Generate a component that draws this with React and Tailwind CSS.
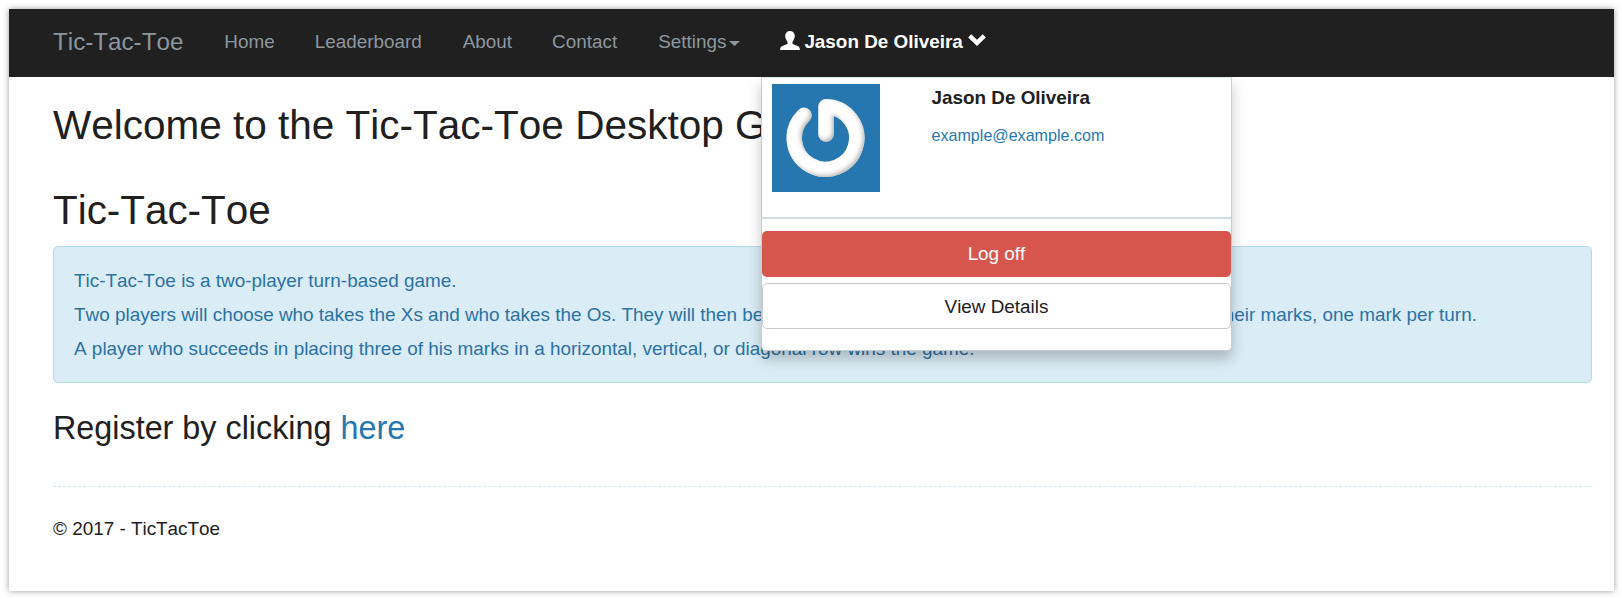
const navLinks = [
  { label: "Home", className: "ml-[41px]" },
  { label: "Leaderboard", className: "ml-10" },
  { label: "About", className: "ml-[41px]" },
  { label: "Contact", className: "ml-10" },
];

function UserIcon() {
  return (
    <svg className="h-[19px] w-5 shrink-0" viewBox="0 0 20 19" fill="#fff">
      <path d="M10 0C7 0 5.2 2 5.2 5.1c0 1 .3 1.9.7 2.9.7 1.600 1.500 2.400 1.700 3.500.1 1-.3 1.500-1.600 2.100l-4 1.700C.7 15.900.2 16.600.1 19h19.800c-.1-2.400-.6-3.100-1.900-3.700l-4-1.700c-1.300-.6-1.700-1.100-1.600-2.100.2-1.100 1-1.900 1.700-3.500.4-1 .7-1.900.7-2.900C14.800 2 13 0 10 0Z" />
    </svg>
  );
}

function ChevronIcon() {
  return (
    <svg className="h-3 w-[18px] shrink-0" viewBox="0 0 18 12" fill="none" stroke="#fff" strokeWidth="4.400">
      <path d="M1.700 1.900 9 8.900l7.300-7" />
    </svg>
  );
}

function Avatar() {
  return (
    <svg className="h-[108px] w-[108px] shrink-0" viewBox="0 0 108 108">
      <defs>
        <filter id="bevel" x="-25%" y="-25%" width="150%" height="150%">
          <feOffset in="SourceAlpha" dx="-2" dy="-2" result="moved" />
          <feGaussianBlur in="moved" stdDeviation="2" result="soft" />
          <feComposite in="SourceAlpha" in2="soft" operator="out" result="edge" />
          <feFlood floodColor="#a8a8a4" floodOpacity="0.850" />
          <feComposite in2="edge" operator="in" result="shade" />
          <feMerge>
            <feMergeNode in="SourceGraphic" />
            <feMergeNode in="shade" />
          </feMerge>
        </filter>
      </defs>
      <rect width="108" height="108" fill="#2677af" />
      <g filter="url(#bevel)" fill="none" stroke="#fff" strokeLinecap="round" strokeLinejoin="round" strokeWidth="15.500">
        <path d="M32 31.300A31.250 31.250 0 1 0 54 22.750V50" />
      </g>
    </svg>
  );
}

function AccountMenu() {
  return (
    <div className="absolute top-[68px] left-[752px] z-10 flex h-[274px] w-[471px] flex-col rounded-b-[5px] border border-t-[#dcecf3] border-[#c6cccd] bg-white shadow-[0_8px_14px_rgba(0,0,0,0.22)]">
      <div className="flex pt-1.5 pl-2.5">
        <Avatar />
        <div className="ml-[51.500px] flex flex-col pt-px">
          <strong className="text-[18.890px] leading-[26px] font-bold text-[#202020]">Jason De Oliveira</strong>
          <a className="mt-3 text-[16.100px] leading-6 text-[#2677af]">example@example.com</a>
        </div>
      </div>
      <div className="mt-[25px] h-0.5 bg-[#cddbe2]" />
      <button className="mt-3 h-[46px] rounded-[5px] bg-[#d6564e] text-[18.890px] text-white">Log off</button>
      <button className="mt-1.5 h-[46px] rounded-[5px] border border-[#c6cccd] bg-white pt-0.5 text-[18.890px] text-[#202020]">View Details</button>
    </div>
  );
}

function Navbar() {
  return (
    <nav className="relative flex h-[68px] items-start bg-[#202020] pl-11 text-[18.890px] whitespace-nowrap text-[#8d979f]">
      <a className="pt-[17px] text-[24.200px] leading-8">Tic-Tac-Toe</a>
      {navLinks.map((link) => (
        <a key={link.label} className={`pt-5 leading-[26px] ${link.className}`}>
          {link.label}
        </a>
      ))}
      <a className="ml-[41px] flex items-start pt-5 leading-[26px]">
        Settings
        <svg className="mt-[12px] ml-[3px] h-[5px] w-[11px]" viewBox="0 0 11 5" fill="currentColor">
          <path d="M0 0h11L5.500 5Z" />
        </svg>
      </a>
      <a className="ml-10 flex items-start pt-5 leading-[26px] font-bold text-white">
        <span className="mt-0.5">
          <UserIcon />
        </span>
        <span className="ml-1">Jason De Oliveira</span>
        <span className="mt-[5px] ml-[5px]">
          <ChevronIcon />
        </span>
      </a>
      <AccountMenu />
    </nav>
  );
}

export default function App() {
  return (
    <div className="h-[599px] w-full overflow-hidden bg-white pt-[9px] pr-2 pl-[9px] font-['Liberation_Sans',Arial,sans-serif] text-[#202020] [font-kerning:none]">
      <div className="h-[582px] bg-white shadow-[0_0_6px_rgba(0,0,0,0.4)]">
        <Navbar />
        <main className="flex flex-col pr-[22px] pl-11">
          <h1 className="mt-[26px] text-[40.500px] leading-[44px]">Welcome to the Tic-Tac-Toe Desktop Game!</h1>
          <h2 className="mt-[41px] text-[40.400px] leading-[44px]">Tic-Tac-Toe</h2>
          <div className="mt-[14px] h-[137px] rounded-[5px] border border-[#b0daee] bg-[#daecf6] px-5 pt-[17px] text-[18.915px] leading-[34px] whitespace-nowrap text-[#2b72a3]">
            <p>Tic-Tac-Toe is a two-player turn-based game.</p>
            <p>
              Two players will choose who takes the Xs and who takes the Os. They will then be taking turns and mark open spaces on the board with their marks, one mark per turn.
            </p>
            <p>A player who succeeds in placing three of his marks in a horizontal, vertical, or diagonal row wins the game.</p>
          </div>
          <h3 className="mt-[27px] text-[32.350px] leading-9">
            Register by clicking <a className="text-[#2677af]">here</a>
          </h3>
          <hr className="mt-10 border-t border-dashed border-[#d3e9f4]" />
          <footer className="mt-[29px] text-[18.890px] leading-[26px]">© 2017 - TicTacToe</footer>
        </main>
      </div>
    </div>
  );
}
